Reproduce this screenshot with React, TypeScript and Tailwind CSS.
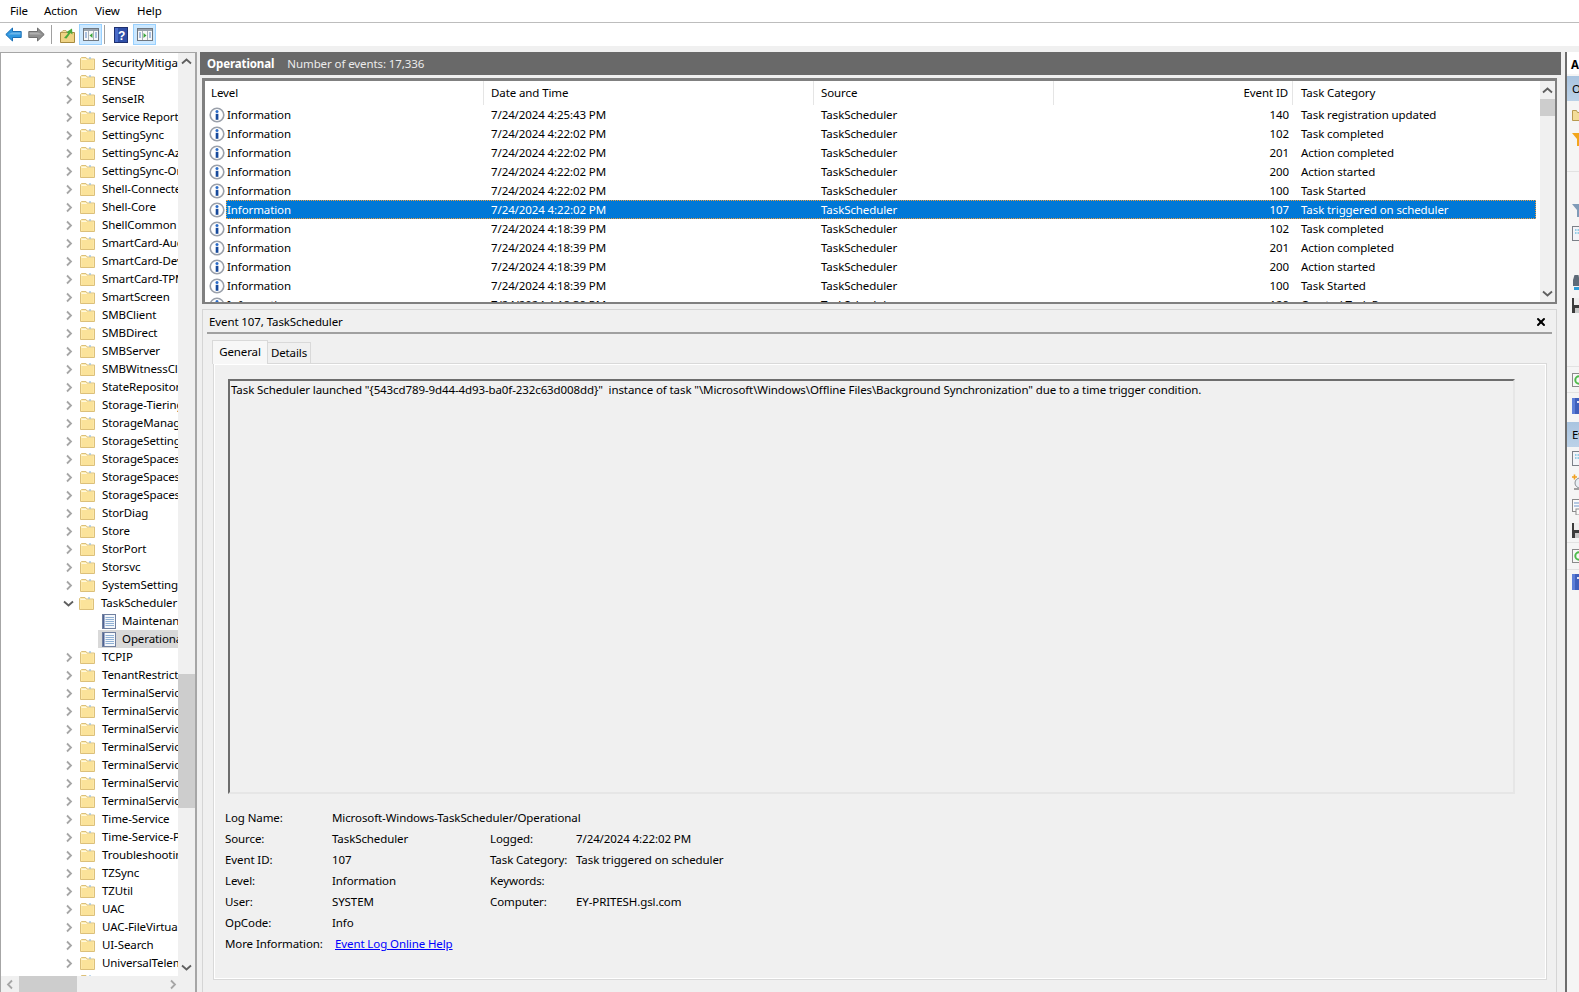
import React from 'react';
import { X } from 'lucide-react';

const treeItems = [
  'SecurityMitigations', 'SENSE', 'SenseIR', 'Service Reporting', 'SettingSync', 'SettingSync-Azure', 'SettingSync-OneDrive',
  'Shell-ConnectedAccount', 'Shell-Core', 'ShellCommon', 'SmartCard-Audit', 'SmartCard-DeviceEnum', 'SmartCard-TPM',
  'SmartScreen', 'SMBClient', 'SMBDirect', 'SMBServer', 'SMBWitnessClient', 'StateRepository', 'Storage-Tiering',
  'StorageManagement', 'StorageSettings', 'StorageSpaces-Driver', 'StorageSpaces-Manager', 'StorageSpaces-Parity',
  'StorDiag', 'Store', 'StorPort', 'Storsvc', 'SystemSettings',
];
const treeItems2 = [
  'TCPIP', 'TenantRestrictions', 'TerminalServices-1', 'TerminalServices-2', 'TerminalServices-3', 'TerminalServices-4',
  'TerminalServices-5', 'TerminalServices-6', 'TerminalServices-7', 'Time-Service', 'Time-Service-PTP', 'Troubleshooting',
  'TZSync', 'TZUtil', 'UAC', 'UAC-FileVirtualization', 'UI-Search', 'UniversalTelemetry', 'User',
];

const events = [
  ['7/24/2024 4:25:43 PM', '140', 'Task registration updated'],
  ['7/24/2024 4:22:02 PM', '102', 'Task completed'],
  ['7/24/2024 4:22:02 PM', '201', 'Action completed'],
  ['7/24/2024 4:22:02 PM', '200', 'Action started'],
  ['7/24/2024 4:22:02 PM', '100', 'Task Started'],
  ['7/24/2024 4:22:02 PM', '107', 'Task triggered on scheduler'],
  ['7/24/2024 4:18:39 PM', '102', 'Task completed'],
  ['7/24/2024 4:18:39 PM', '201', 'Action completed'],
  ['7/24/2024 4:18:39 PM', '200', 'Action started'],
  ['7/24/2024 4:18:39 PM', '100', 'Task Started'],
  ['7/24/2024 4:18:39 PM', '129', 'Created Task Process'],
];

const Chevron = ({ dir = 'right', className = '' }: { dir?: 'right' | 'down' | 'up' | 'left'; className?: string }) => {
  const paths = { right: 'M3 1.5 7 5.5 3 9.5', left: 'M7 1.5 3 5.5 7 9.5', down: 'M1 3.5 5.5 7.5 10 3.5', up: 'M1 7.5 5.5 3.5 10 7.5' };
  return (
    <svg width="11" height="11" viewBox="0 0 11 11" className={className} fill="none">
      <path d={paths[dir]} stroke={dir === 'down' || dir === 'up' ? '#5f5f5f' : '#a6a6a6'} strokeWidth="1.8" />
    </svg>
  );
};

const Folder = () => (
  <svg width="15" height="14" viewBox="0 0 15 14" className="shrink-0">
    <path d="M.5 13.5V2.5l1-1h4.500l1 1.500h7.500v10.500z" fill="#fdeeb8" stroke="#dcc07a" />
    <path d="M1.500 4h12v9h-12z" fill="#fbe39a" />
    <path d="M1.500 3h5v1h-5z" fill="#fff8de" />
    <path d="M9 1.500h2v1H9z" fill="#7fb4e0" />
  </svg>
);

const LogIcon = () => (
  <svg width="14" height="15" viewBox="0 0 14 15" className="shrink-0">
    <rect x=".5" y=".5" width="13" height="14" fill="#f4f7fb" stroke="#6f7f9f" />
    <path d="M1 1h1.500v13H1z" fill="#4f6394" />
    <path d="M3.500 3.500h8.500M3.500 5.500h8.500M3.500 7.500h8.500M3.500 9.500h8.500M3.500 11.500h8.500" stroke="#8fb0d4" />
  </svg>
);

const InfoIcon = () => (
  <svg width="16" height="16" viewBox="0 0 16 16" className="shrink-0">
    <circle cx="8" cy="8" r="6.8" fill="#ffffff" stroke="#9aa0aa" strokeWidth="1.6" />
    <circle cx="8" cy="4.500" r="1.500" fill="#2b6cc8" />
    <path d="M6.700 6.800h2.700v6H6.700z" fill="#174a9c" />
  </svg>
);

const ArrowIcon = ({ left, fill, stroke }: { left?: boolean; fill: string; stroke: string }) => (
  <svg width="17" height="15" viewBox="0 0 17 15">
    <path d={left ? 'M.8 7.500 7.500 1v3.500h8.700v6H7.500V14z' : 'M16.200 7.500 9.500 1v3.500H.8v6h8.700V14z'} fill={fill} stroke={stroke} />
    <path d={left ? 'M7 5.500h8.500v2H3z' : 'M10 5.500H1.500v2H14z'} fill="#ffffff" opacity=".3" />
  </svg>
);

const FolderUp = () => (
  <svg width="15" height="16" viewBox="0 0 15 16">
    <path d="M.5 15.500v-10h14v10z" fill="#efd384" stroke="#a68a3f" />
    <path d="M1 5.500 3 3.500h3l1 2z" fill="#f7e3a2" stroke="#a68a3f" strokeWidth=".6" />
    <path d="M4 11 8 6.500 6.500 5 12 1.500 12.500 7.500 10.500 6 6.500 11.500z" fill="#49a83c" />
  </svg>
);

const PaneIcon = ({ arrow, side }: { arrow: string; side: 'left' | 'right' }) => (
  <svg width="16" height="13" viewBox="0 0 16 13">
    <rect x=".5" y=".5" width="15" height="12" fill="#f8f8f8" stroke="#6f7780" />
    <path d="M1 1h14v2H1z" fill="#9aa3ad" />
    <path d="M5.500 3v9M10.500 3v9" stroke="#a9b1ba" />
    <path d="M2 5h2M2 7h2M2 9h2M12 5h2M12 7h2M12 9h2" stroke="#5a88c8" />
    <path d={side === 'left' ? 'M9.500 5v5L6.500 7.500z' : 'M6.500 5v5l3-2.500z'} fill={arrow} />
  </svg>
);

const HelpBook = () => (
  <svg width="14" height="16" viewBox="0 0 14 16">
    <rect x=".5" y=".5" width="13" height="15" fill="#2f4fa8" stroke="#1d2f6f" />
    <path d="M1 1h3v14H1z" fill="#4a6cc8" />
    <text x="7.500" y="12.500" fontSize="12" fontWeight="700" fill="#ffffff" textAnchor="middle" fontFamily="Liberation Sans, sans-serif">?</text>
  </svg>
);

const ToggleButton = ({ children }: { children: React.ReactNode }) => (
  <div className="flex h-[21px] w-[23px] items-center justify-center border border-[#99d1ff] bg-[#cce8ff]">{children}</div>
);

const ActionFolder = () => (
  <svg width="12" height="12" viewBox="0 0 12 12"><path d="M.5 11.500V1.500h4l1 2h6v8z" fill="#f3dc98" stroke="#b89a50" /></svg>
);
const ActionFunnel = ({ color }: { color: string }) => (
  <svg width="12" height="14" viewBox="0 0 12 14"><path d="M0 1h12L7 7v7H5V7z" fill={color} /></svg>
);
const ActionDoc = () => (
  <svg width="13" height="15" viewBox="0 0 13 15"><rect x=".5" y=".5" width="12" height="14" fill="#f2f4f8" stroke="#7b8088" /><path d="M3 4h7M3 7h7" stroke="#39a7d8" strokeDasharray="1.500 1" /></svg>
);
const ActionFind = () => (
  <svg width="9" height="16" viewBox="0 0 9 16"><path d="M1 6 2.500 1h4l1 5v6H1z" fill="#5d6a78" /><path d="M2 13h6v3H2z" fill="#2d9cd8" /></svg>
);
const ActionSave = () => (
  <svg width="12" height="15" viewBox="0 0 12 15"><path d="M0 0h12v15H0z" fill="#3c3c3c" /><path d="M2 0h7v7H2z" fill="#eeeeee" /><path d="M3 10h6v5H3z" fill="#c8c8c8" /></svg>
);
const ActionRefresh = () => (
  <svg width="13" height="14" viewBox="0 0 13 14"><rect x=".5" y=".5" width="12" height="13" fill="#f8f8f8" stroke="#8b8b8b" /><circle cx="7" cy="7" r="3.700" fill="none" stroke="#4fbb4b" strokeWidth="2" /></svg>
);
const ActionHelp = () => (
  <svg width="12" height="16" viewBox="0 0 12 16"><rect width="12" height="16" fill="#3f5fbc" /><path d="M0 0h3v16H0z" fill="#5d7fd8" /><path d="M5 3h4v2H5zM7 7h2v2H7z" fill="#dfe6f8" /></svg>
);
const ActionClock = () => (
  <svg width="13" height="17" viewBox="0 0 13 17"><circle cx="8" cy="9" r="5" fill="#e8eef4" stroke="#8a8f95" /><path d="M0 3h5M2.500 .5v5" stroke="#f0a020" strokeWidth="1.600" /><path d="M2 14h10v2H2z" fill="#a0a0a0" /></svg>
);
const ActionCopy = () => (
  <svg width="12" height="16" viewBox="0 0 12 16"><rect x=".5" y=".5" width="10" height="12" fill="#fafafa" stroke="#8b8b8b" /><path d="M2 4h5M2 7h5" stroke="#6f95c8" /><rect x="4" y="10" width="8" height="6" fill="#fafafa" stroke="#8b8b8b" /></svg>
);

const ActionRow = ({ h, children, line }: { h: string; children?: React.ReactNode; line?: boolean }) => (
  <div className={`flex shrink-0 items-center justify-start overflow-hidden pl-[5px] [&>svg]:shrink-0 ${h} ${line ? 'border-b border-[#e2e2e2]' : ''}`}>{children}</div>
);

const Label = ({ children }: { children?: React.ReactNode }) => <div className="flex h-[21px] items-center whitespace-nowrap">{children}</div>;

const TreeRow = ({ name }: { name: string }) => (
  <div className="flex h-[18px] items-center overflow-hidden whitespace-nowrap pl-[63px]">
    <Chevron className="mr-[5px] shrink-0" />
    <Folder />
    <span className="ml-[7px]">{name}</span>
  </div>
);

export default function App() {
  return (
    <div className="flex h-[992px] w-[1579px] flex-col overflow-hidden bg-[#f0f0f0] font-['Noto_Sans',sans-serif] text-[11.5px] tracking-[-0.1px] text-black">
      {/* menu */}
      <div className="flex h-[23px] shrink-0 items-center border-b border-[#bdbdbd] bg-white pl-[10px]">
        <span className="w-[34px]">File</span>
        <span className="w-[51px]">Action</span>
        <span className="w-[42px]">View</span>
        <span>Help</span>
      </div>
      {/* toolbar */}
      <div className="flex h-[23px] shrink-0 items-center bg-white pl-[5px]">
        <ArrowIcon left fill="#2f97e0" stroke="#1a6fb5" />
        <div className="w-[6px]" />
        <ArrowIcon fill="#8f8f8f" stroke="#6f6f6f" />
        <div className="mx-[6px] h-[19px] w-px bg-[#a0a0a0]" />
        <div className="ml-[2px] mr-[4px]"><FolderUp /></div>
        <ToggleButton><PaneIcon arrow="#3aa53a" side="left" /></ToggleButton>
        <div className="mx-[2px] h-[19px] w-px bg-[#a0a0a0]" />
        <div className="ml-[7px] mr-[5px]"><HelpBook /></div>
        <ToggleButton><PaneIcon arrow="#3aa53a" side="right" /></ToggleButton>
      </div>
      <div className="h-[6px] shrink-0" />

      <div className="flex min-h-0 flex-1">
        {/* tree */}
        <div className="flex w-[197px] shrink-0 flex-col border-r-2 border-l border-t border-[#a6a6a6] bg-white">
          <div className="flex min-h-0 flex-1">
            <div className="w-[177px] shrink-0 overflow-hidden pt-[1px]">
              {treeItems.map((name, i) => <TreeRow key={i} name={name} />)}
              <div className="flex h-[18px] items-center overflow-hidden whitespace-nowrap pl-[62px]">
                <Chevron dir="down" className="mr-[5px] shrink-0" />
                <Folder />
                <span className="ml-[7px]">TaskScheduler</span>
              </div>
              <div className="flex h-[18px] items-center overflow-hidden whitespace-nowrap pl-[101px]">
                <LogIcon />
                <span className="ml-[6px]">Maintenance</span>
              </div>
              <div className="ml-[97px] flex h-[18px] items-center overflow-hidden whitespace-nowrap bg-[#d9d9d9] pl-[4px]">
                <LogIcon />
                <span className="ml-[6px]">Operational</span>
              </div>
              {treeItems2.map((name, i) => <TreeRow key={i} name={name} />)}
            </div>
            <div className="flex w-[17px] shrink-0 flex-col items-center bg-[#f0f0f0]">
              <div className="flex h-[17px] items-center"><Chevron dir="up" /></div>
              <div className="min-h-0 flex-1 w-full pt-[604px]"><div className="h-[134px] w-full bg-[#cdcdcd]" /></div>
              <div className="flex h-[17px] items-center"><Chevron dir="down" /></div>
            </div>
          </div>
          <div className="flex h-[16px] shrink-0 items-center bg-[#f0f0f0]">
            <div className="flex w-[18px] justify-center"><Chevron dir="left" /></div>
            <div className="h-full w-[58px] bg-[#cdcdcd]" />
            <div className="w-[87px]" />
            <div className="flex w-[18px] justify-center"><Chevron dir="right" /></div>
          </div>
        </div>

        {/* centre */}
        <div className="ml-[3px] flex w-[1361px] shrink-0 flex-col">
          <div className="flex h-[23px] shrink-0 items-center bg-[#696969] pl-[7px] text-[#ececec]">
            <span className="font-bold text-white">Operational</span>
            <span className="ml-[13px]">Number of events: 17,336</span>
          </div>
          <div className="ml-[2px] mt-[3px] flex h-[226px] w-[1355px] shrink-0 border-[3px] border-b-2 border-r-2 border-[#808080] bg-white">
            <div className="w-[1331px] shrink-0 overflow-hidden">
              <div className="flex h-[24px] items-center">
                <div className="h-full w-[279px] border-r border-[#e5e5e5] pl-[6px] leading-[23px]">Level</div>
                <div className="h-full w-[330px] border-r border-[#e5e5e5] pl-[7px] leading-[23px]">Date and Time</div>
                <div className="h-full w-[240px] border-r border-[#e5e5e5] pl-[7px] leading-[23px]">Source</div>
                <div className="h-full w-[239px] border-r border-[#e5e5e5] pr-[4px] text-right leading-[23px]">Event ID</div>
                <div className="pb-[1px] pl-[8px]">Task Category</div>
              </div>
              {events.map(([date, id, cat], i) => {
                const sel = i === 5;
                return (
                  <div key={i} className={`flex h-[19px] items-center whitespace-nowrap ${sel ? 'text-white' : ''}`}>
                    <div className="flex h-full w-[21px] shrink-0 items-center justify-center pl-[2px]"><InfoIcon /></div>
                    <div className={`flex h-full flex-1 items-center ${sel ? 'border border-dotted border-[#f0a040] bg-[#0078d7]' : 'border border-transparent'}`}>
                      <div className="w-[258px]">Information</div>
                      <div className="w-[330px] pl-[6px]">{date}</div>
                      <div className="w-[240px] pl-[6px]">TaskScheduler</div>
                      <div className="w-[239px] pr-[5px] text-right">{id}</div>
                      <div className="pl-[7px]">{cat}</div>
                    </div>
                  </div>
                );
              })}
            </div>
            <div className="ml-[4px] flex w-[15px] shrink-0 flex-col items-center bg-[#f0f0f0]">
              <div className="flex h-[18px] items-center"><Chevron dir="up" /></div>
              <div className="h-[17px] w-full bg-[#cdcdcd]" />
              <div className="flex-1" />
              <div className="flex h-[18px] items-center"><Chevron dir="down" /></div>
            </div>
          </div>

          {/* details */}
          <div className="ml-[2px] mt-[5px] flex min-h-0 w-[1355px] flex-1 flex-col border-t border-l border-r border-[#d5d5d5]">
            <div className="flex h-[22px] shrink-0 items-center justify-between pl-[6px] pr-[5px] pt-[1px]">
              <span>Event 107, TaskScheduler</span>
              <X size={12} strokeWidth={4} className="mr-[4px]" />
            </div>
            <div className="mx-[4px] h-[2px] shrink-0 bg-[#a0a0a0]" />
            <div className="ml-[9px] mt-[6px] flex h-[23px] shrink-0 items-end">
              <div className="z-10 -mb-px flex h-[24px] w-[56px] items-center justify-center border border-b-0 border-[#d9d9d9] bg-[#f7f7f7] pb-[2px]">General</div>
              <div className="flex h-[21px] w-[43px] items-center justify-center border border-l-0 border-b-0 border-[#d9d9d9]">Details</div>
            </div>
            <div className="ml-[10px] flex h-[617px] w-[1334px] shrink-0 flex-col border border-[#d9d9d9] shadow-[inset_0_0_0_1px_#ffffff]">
              <div className="ml-[14px] mt-[15px] h-[415px] w-[1287px] shrink-0 overflow-hidden border-2 border-b-[#e6e6e6] border-l-[#6d6d6d] border-r-[#e6e6e6] border-t-[#6d6d6d] pl-[1px] whitespace-pre">
                {'Task Scheduler launched "{543cd789-9d44-4d93-ba0f-232c63d008dd}"  instance of task "\\Microsoft\\Windows\\Offline Files\\Background Synchronization" due to a time trigger condition.'}
              </div>
              <div className="ml-[11px] mt-[13px] grid grid-cols-[107px_158px_86px_1fr]">
                <Label>Log Name:</Label><Label>Microsoft-Windows-TaskScheduler/Operational</Label><Label /><Label />
                <Label>Source:</Label><Label>TaskScheduler</Label><Label>Logged:</Label><Label>7/24/2024 4:22:02 PM</Label>
                <Label>Event ID:</Label><Label>107</Label><Label>Task Category:</Label><Label>Task triggered on scheduler</Label>
                <Label>Level:</Label><Label>Information</Label><Label>Keywords:</Label><Label />
                <Label>User:</Label><Label>SYSTEM</Label><Label>Computer:</Label><Label>EY-PRITESH.gsl.com</Label>
                <Label>OpCode:</Label><Label>Info</Label><Label /><Label />
                <Label>More Information:</Label>
                <Label><span className="ml-[3px] text-[#0000ff] underline">Event Log Online Help</span></Label><Label /><Label />
              </div>
            </div>
          </div>
        </div>

        {/* actions, cut off by the window edge */}
        <div className="ml-[4px] flex min-w-0 flex-1 flex-col overflow-hidden border-l-2 border-[#6d6d6d] bg-[#f5f5f5]">
          <div className="flex h-[22px] shrink-0 items-center bg-white pl-[4px] pt-[3px] font-bold">Actions</div>
          <div className="mt-[2px] flex h-[25px] shrink-0 items-center bg-gradient-to-b from-[#a9c4e0] to-[#bcd2e8] pl-[5px]">Operational</div>
          <ActionRow h="h-[27px]"><ActionFolder /></ActionRow>
          <ActionRow h="h-[22px]"><ActionFunnel color="#f2a51c" /></ActionRow>
          <ActionRow h="h-[22px]" line />
          <div className="h-[26px] shrink-0" />
          <ActionRow h="h-[24px]"><ActionFunnel color="#7f9bb8" /></ActionRow>
          <ActionRow h="h-[23px]"><ActionDoc /></ActionRow>
          <div className="h-[25px] shrink-0" />
          <ActionRow h="h-[24px]"><ActionFind /></ActionRow>
          <ActionRow h="h-[23px]"><ActionSave /></ActionRow>
          <ActionRow h="h-[50px]" line />
          <ActionRow h="h-[26px]" line><ActionRefresh /></ActionRow>
          <ActionRow h="h-[25px]"><ActionHelp /></ActionRow>
          <div className="mt-[4px] flex h-[25px] shrink-0 items-center overflow-hidden whitespace-nowrap bg-gradient-to-b from-[#a9c4e0] to-[#bcd2e8] pl-[5px]">Event 107, TaskScheduler</div>
          <ActionRow h="h-[23px]"><ActionDoc /></ActionRow>
          <ActionRow h="h-[25px]"><ActionClock /></ActionRow>
          <ActionRow h="h-[24px]"><ActionCopy /></ActionRow>
          <ActionRow h="h-[24px]" line><ActionSave /></ActionRow>
          <ActionRow h="h-[27px]" line><ActionRefresh /></ActionRow>
          <ActionRow h="h-[24px]"><ActionHelp /></ActionRow>
        </div>
      </div>
    </div>
  );
}
